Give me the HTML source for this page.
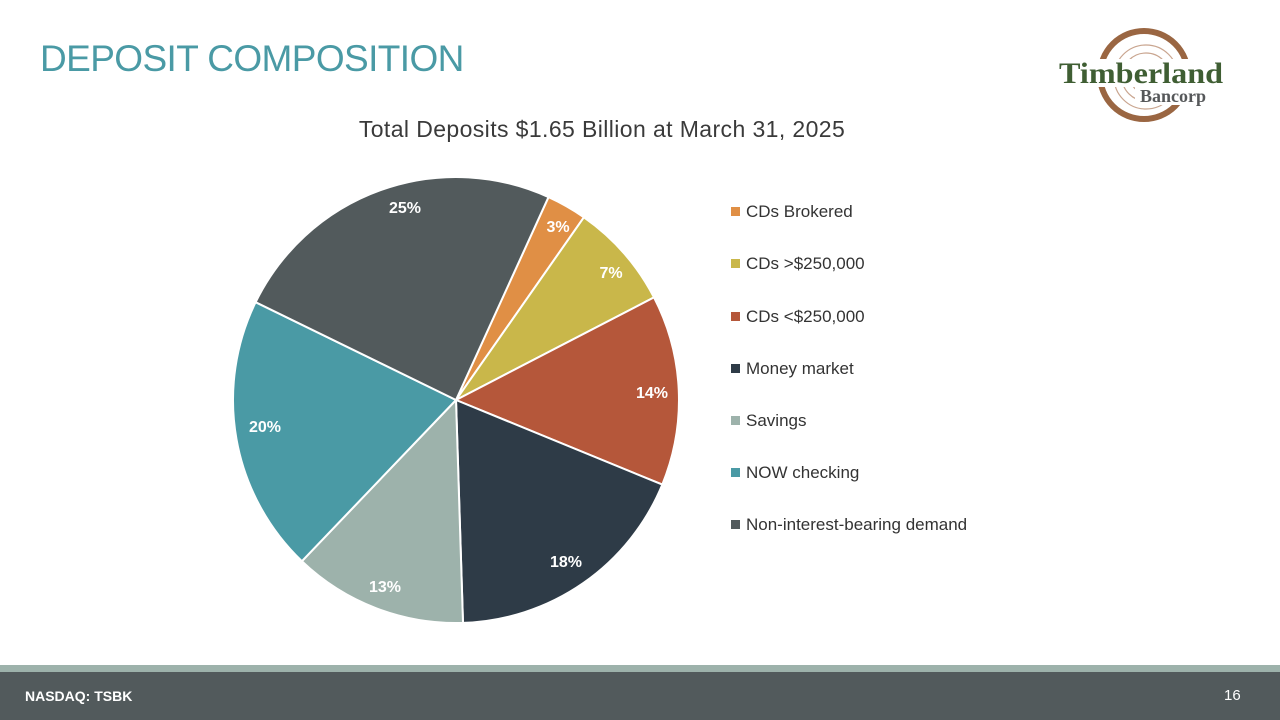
<!DOCTYPE html>
<html><head><style>
body{margin:0;width:1280px;height:720px;position:relative;background:#fff;font-family:"Liberation Sans",sans-serif;overflow:hidden}
.h{position:absolute;left:40px;top:38px;font-size:37px;color:#4A9AA5;letter-spacing:-0.6px;white-space:nowrap}
.t{position:absolute;left:0;width:1204px;text-align:center;top:116px;font-size:23px;letter-spacing:0.4px;color:#3a3a3a}
.lg{position:absolute;left:731px;font-size:17px;color:#333;white-space:nowrap}
.lg i{display:inline-block;width:9px;height:9px;margin-right:6px;vertical-align:1px}
.band{position:absolute;left:0;top:665px;width:1280px;height:7px;background:#9DB2AB}
.foot{position:absolute;left:0;top:672px;width:1280px;height:48px;background:#525A5C;color:#fff}
</style></head><body>
<div class="h">DEPOSIT COMPOSITION</div>
<svg style="position:absolute;left:1055px;top:25px" width="180" height="100" viewBox="0 0 180 100">
<circle cx="89" cy="50" r="44" fill="none" stroke="#9a6642" stroke-width="6"/>
<g fill="none" stroke="#c9a58f" stroke-width="1.2"><circle cx="91" cy="52" r="32"/><circle cx="91" cy="52" r="24"/><circle cx="91" cy="52" r="16"/></g>
<rect x="2" y="34" width="172" height="28" fill="#fff"/>
<rect x="80" y="62" width="90" height="18" fill="#fff"/>
<text x="4" y="58" font-family="Liberation Serif,serif" font-weight="bold" font-size="30" fill="#3f5e33" textLength="164" lengthAdjust="spacingAndGlyphs">Timberland</text>
<text x="85" y="77" font-family="Liberation Serif,serif" font-weight="bold" font-size="18" fill="#56585a">Bancorp</text>
</svg>
<div class="t">Total Deposits $1.65 Billion at March 31, 2025</div>
<svg style="position:absolute;left:0;top:0" width="1280" height="720">
<g stroke="#fff" stroke-width="2">
<path d="M456 400L548.5 197.1A223 223 0 0 1 583.9 217.3Z" fill="#E08F45"/>
<path d="M456 400L583.9 217.3A223 223 0 0 1 654 297.4Z" fill="#C9B74A"/>
<path d="M456 400L654 297.4A223 223 0 0 1 662.3 484.6Z" fill="#B5573A"/>
<path d="M456 400L662.3 484.6A223 223 0 0 1 463 622.9Z" fill="#2E3B47"/>
<path d="M456 400L463 622.9A223 223 0 0 1 301.9 561.2Z" fill="#9DB2AB"/>
<path d="M456 400L301.9 561.2A223 223 0 0 1 255.6 302.2Z" fill="#4A9AA5"/>
<path d="M456 400L255.6 302.2A223 223 0 0 1 548.5 197.1Z" fill="#525A5C"/>
</g>
<g fill="#fff" font-family="Liberation Sans,sans-serif" font-weight="bold" font-size="16" text-anchor="middle">
<text x="405" y="213">25%</text><text x="558" y="232">3%</text><text x="611" y="278">7%</text>
<text x="652" y="398">14%</text><text x="566" y="567">18%</text><text x="385" y="592">13%</text><text x="265" y="432">20%</text>
</g></svg>
<div class="lg" style="top:202px"><i style="background:#E08F45"></i>CDs Brokered</div>
<div class="lg" style="top:254px"><i style="background:#C9B74A"></i>CDs &gt;$250,000</div>
<div class="lg" style="top:307px"><i style="background:#B5573A"></i>CDs &lt;$250,000</div>
<div class="lg" style="top:359px"><i style="background:#2E3B47"></i>Money market</div>
<div class="lg" style="top:411px"><i style="background:#9DB2AB"></i>Savings</div>
<div class="lg" style="top:463px"><i style="background:#4A9AA5"></i>NOW checking</div>
<div class="lg" style="top:515px"><i style="background:#525A5C"></i>Non-interest-bearing demand</div>
<div class="band"></div>
<div class="foot"><span style="position:absolute;left:25px;top:16px;font-size:14px;font-weight:bold">NASDAQ: TSBK</span><span style="position:absolute;left:1224px;top:15px;font-size:15px">16</span></div>
</body></html>
